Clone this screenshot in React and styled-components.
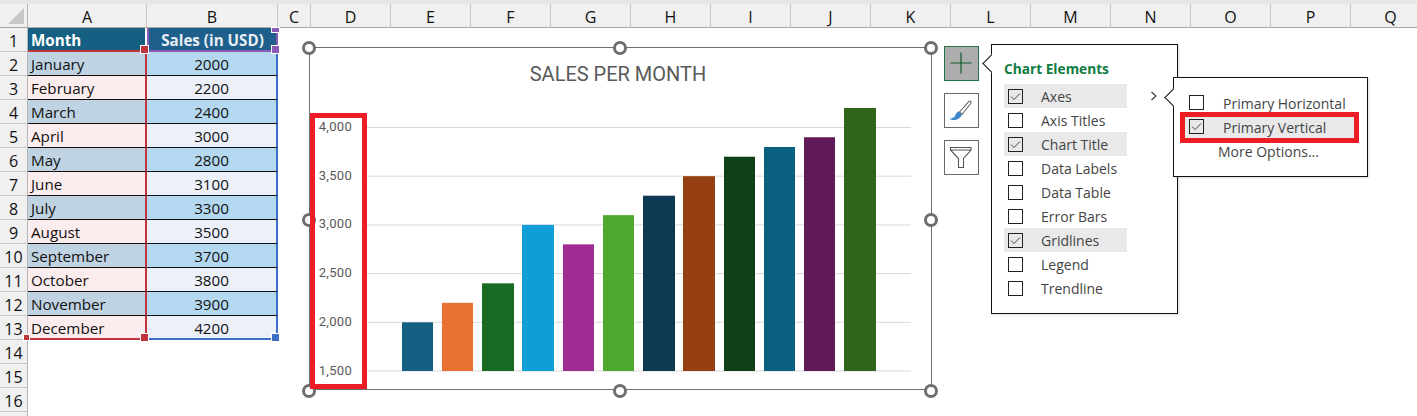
import React from "react";
import styled, { createGlobalStyle } from "styled-components";

const Global = createGlobalStyle`
  html, body { margin: 0; padding: 0; background: #fff; overflow: hidden; }
  * { box-sizing: border-box; }
`;

const Page = styled.div`
  position: relative;
  width: 1417px;
  height: 416px;
  overflow: hidden;
  background: #fff;
  font-family: "Open Sans", "Noto Sans", sans-serif;
`;
const TopStrip = styled.div`
  height: 4px;
  background: #e6e6e6;
`;
const Sheet = styled.div`
  display: grid;
  grid-template-columns: 28px 119px 131px 33px repeat(14, 80px);
  grid-template-rows: 24px;
  grid-auto-rows: 24px;
  width: 1431px;
`;
const Corner = styled.div`
  position: relative;
  background: #f0f0f0;
  border-right: 1px solid #b5b5b5;
  border-bottom: 1px solid #a8a8a8;
  &::after {
    content: "";
    position: absolute;
    right: 3px;
    bottom: 3px;
    border-style: solid;
    border-width: 0 0 16px 16px;
    border-color: transparent transparent #c8c8c8 transparent;
  }
`;
const ColHead = styled.div`
  display: flex;
  align-items: center;
  justify-content: center;
  padding-top: 2px;
  background: #f0f0f0;
  border-right: 1px solid #c6c6c6;
  border-bottom: 1px solid #a8a8a8;
  color: #111;
  font-size: 16px;
`;
const RowHead = styled.div`
  grid-column: 1;
  position: relative;
  display: flex;
  align-items: center;
  justify-content: center;
  padding-top: 2px;
  background: #f0f0f0;
  border-right: 1px solid #b5b5b5;
  border-bottom: 1px solid #c6c6c6;
  color: #111;
  font-size: 16px;
  ${(p) =>
    p.$tick &&
    `&::after {
      content: "";
      position: absolute;
      right: -3px;
      bottom: -2px;
      width: 5px;
      height: 5px;
      background: #c0353b;
      border: 1px solid #fff;
      z-index: 2;
    }`}
`;
const Cell = styled.div`
  position: relative;
  display: flex;
  align-items: center;
  justify-content: ${(p) => (p.$num ? "center" : "flex-start")};
  padding-left: ${(p) => (p.$num ? "0" : "3px")};
  padding-top: 1px;
  background: ${(p) => p.$bg};
  color: ${(p) => p.$fg || "#111"};
  font-size: 15.2px;
  font-weight: ${(p) => (p.$head ? 700 : 400)};
  border-bottom: ${(p) => p.$bottom};
  border-right: ${(p) => p.$right};
  border-left: ${(p) => p.$left || "none"};
  ${(p) =>
    p.$handle &&
    `&::after {
      content: "";
      position: absolute;
      right: -4px;
      bottom: -4px;
      width: 7px;
      height: 7px;
      background: ${p.$handle};
      border: 1px solid #fff;
      z-index: 2;
    }`}
  ${(p) =>
    p.$top &&
    `&::before {
      content: "";
      position: absolute;
      right: -4px;
      top: -1px;
      width: 7px;
      height: 4px;
      background: ${p.$top};
      border: 1px solid #fff;
      z-index: 2;
    }`}
`;
const OverlayRow = styled.div`
  position: absolute;
  left: 309px;
  top: 44px;
  display: flex;
  align-items: flex-start;
`;
const ChartFrame = styled.div`
  position: relative;
  flex: none;
  width: 623px;
  height: 343px;
  margin-top: 3px;
  background: #fff;
  box-shadow: inset 0 0 0 1px #6f6f6f;
`;
const ChartSvg = styled.svg`
  display: block;
  width: 623px;
  height: 343px;
`;
const Dot = styled.div`
  position: absolute;
  left: calc(${(p) => p.$x * 0.998}% - 7px);
  top: calc(${(p) => p.$y}% - 6px);
  width: 14px;
  height: 14px;
  border-radius: 50%;
  background: #fff;
  border: 3px solid #6e6e6e;
`;
const AxisMark = styled.div`
  position: absolute;
  left: 1px;
  top: 66px;
  width: 57px;
  height: 276px;
  border: 5px solid #ee1c25;
`;
const SideButtons = styled.div`
  flex: none;
  margin: 2px 12px 0 12px;
  display: flex;
  flex-direction: column;
  gap: 12px;
`;
const SideBtn = styled.div`
  width: 35px;
  height: 35px;
  display: flex;
  align-items: center;
  justify-content: center;
  background: ${(p) => (p.$on ? "#adadad" : "#fff")};
  border: 1px solid ${(p) => (p.$on ? "#217346" : "#6a6a6a")};
`;
const Pop = styled.div`
  background: #fff;
  border: 1px solid #111;
  box-shadow: 1px 1px 2px rgba(0, 0, 0, 0.12);
  &::before {
    content: "";
    position: absolute;
    left: -7px;
    top: ${(p) => p.$arrow}px;
    width: 12px;
    height: 12px;
    background: #fff;
    border-left: 1px solid #111;
    border-bottom: 1px solid #111;
    transform: rotate(45deg);
  }
`;
const MainPop = styled(Pop)`
  position: relative;
  flex: none;
  width: 187px;
  height: 270px;
  padding: 14px 0 0 12px;
`;
const Box = styled.div`
  flex: none;
  width: 15px;
  height: 15px;
  border: 1px solid #222;
  background: ${(p) => (p.$on ? "transparent" : "#fff")};
  display: flex;
  align-items: center;
  justify-content: center;
`;
const Label = styled.span`
  margin-left: ${(p) => p.$ml}px;
  color: #444;
  font-size: 14px;
  white-space: nowrap;
`;
const SubPop = styled(Pop)`
  position: absolute;
  left: 181px;
  top: 32px;
  width: 195px;
  height: 100px;
  padding: 14px 0 0 11px;
  ${Box} { margin-top: -3px; }
  ${Label} { margin-top: -1px; }
`;
const PopTitle = styled.div`
  height: 25px;
  line-height: 19px;
  color: #107c41;
  font-size: 13.7px;
  font-weight: 700;
`;
const Row = styled.div`
  position: relative;
  display: flex;
  align-items: center;
  height: 24px;
  width: ${(p) => p.$w}px;
  padding-left: 4px;
  background: ${(p) => (p.$hl ? "#e9e9e9" : "transparent")};
`;
const Chevron = styled.svg`
  position: absolute;
  left: 157px;
  top: 46px;
`;
const OptionMark = styled.div`
  position: absolute;
  left: -5px;
  top: -4px;
  width: 179px;
  height: 31px;
  border: 5px solid #ee1c25;
`;

const data = [
  ["January", 2000], ["February", 2200], ["March", 2400], ["April", 3000],
  ["May", 2800], ["June", 3100], ["July", 3300], ["August", 3500],
  ["September", 3700], ["October", 3800], ["November", 3900], ["December", 4200],
];
const bars = [
  [402, 31, "#156082"], [442, 31, "#e97132"], [482, 32, "#196b24"], [522, 32, "#0f9ed5"],
  [563, 31, "#a02b93"], [603, 31, "#4ea72e"], [643, 32, "#0d3a52"], [683, 32, "#963f12"],
  [724, 31, "#0f4016"], [764, 31, "#09607f"], [804, 31, "#601a58"], [844, 32, "#2f641b"],
];
const cols = "ABCDEFGHIJKLMNOPQ".split("");
const ticks = [4000, 3500, 3000, 2500, 2000, 1500];
const yOf = (v) => 371 - ((v - 1500) / 500) * 48.7;
const fmt = (v) => v.toLocaleString("en-US");
const dots = [[0, 0], [50, 0], [100, 0], [0, 50], [100, 50], [0, 100], [50, 100], [100, 100]];

const Check = () => (
  <svg width="13" height="13" viewBox="0 0 13 13">
    <path d="M2 6.5 L5 9.5 L11 3.5" fill="none" stroke="#444" strokeWidth="1" />
  </svg>
);
const Option = ({ text, checked, hl, w, ml, children }) => (
  <Row $hl={hl} $w={w}>
    <Box $on={checked}>{checked && <Check />}</Box>
    <Label $ml={ml}>{text}</Label>
    {children}
  </Row>
);

export default function App() {
  return (
    <Page>
      <Global />
      <TopStrip />
      <Sheet>
        <Corner />
        {cols.map((c) => <ColHead key={c}>{c}</ColHead>)}
        <RowHead>1</RowHead>
        <Cell $head $bg="#156082" $fg="#fff" $bottom="2px solid #c0353b" $right="2px solid #fff" $handle="#c0353b">Month</Cell>
        <Cell $head $num $bg="#1f5f8b" $fg="#e8eef5" $bottom="2px solid #8a5bb5" $right="2px solid #8a5bb5" $left="2px solid #8a5bb5" $handle="#8a5bb5" $top="#8a5bb5">Sales (in USD)</Cell>
        {data.map(([m, v], i) => {
          const last = i === data.length - 1;
          const odd = i % 2 === 0;
          return (
            <React.Fragment key={m}>
              <RowHead $tick={last}>{i + 2}</RowHead>
              <Cell $bg={odd ? "#c0d3e2" : "#fbeced"} $bottom={last ? "2px solid #c0353b" : "1px solid #111"} $right="2px solid #c0353b" $handle={last ? "#c0353b" : undefined}>{m}</Cell>
              <Cell $num $bg={odd ? "#b3d8f0" : "#ebf0f9"} $bottom={last ? "2px solid #3d6fc6" : "1px solid #111"} $right="2px solid #3d6fc6" $handle={last ? "#3d6fc6" : undefined}>{v}</Cell>
            </React.Fragment>
          );
        })}
        {[14, 15, 16].map((n) => <RowHead key={n}>{n}</RowHead>)}
        <RowHead />
      </Sheet>

      <OverlayRow>
        <ChartFrame>
          <ChartSvg viewBox="309 47 623 343">
            <text x="618" y="81" textAnchor="middle" fontFamily="Roboto, sans-serif" fontSize="20" fill="#595959">SALES PER MONTH</text>
            {ticks.map((t) => (
              <g key={t}>
                <line x1="367" x2="911" y1={yOf(t)} y2={yOf(t)} stroke="#d9d9d9" strokeWidth="1" />
                <text x="352" y={yOf(t) + 3.5} textAnchor="end" fontFamily="Roboto, sans-serif" fontSize="13" letterSpacing="0.3" fill="#595959">{fmt(t)}</text>
              </g>
            ))}
            {data.map(([m, v], i) => (
              <rect key={m} x={bars[i][0]} width={bars[i][1]} y={yOf(v)} height={371 - yOf(v)} fill={bars[i][2]} />
            ))}
          </ChartSvg>
          {dots.map(([x, y]) => <Dot key={`${x}-${y}`} $x={x} $y={y} />)}
          <AxisMark />
        </ChartFrame>

        <SideButtons>
          <SideBtn $on>
            <svg width="24" height="24" viewBox="0 0 24 24">
              <path d="M11 .5V21.5M.5 11H21.5" stroke="#0f5a2a" strokeWidth="1.2" fill="none" />
            </svg>
          </SideBtn>
          <SideBtn>
            <svg width="26" height="26" viewBox="0 0 26 26">
              <g transform="translate(-2.5 -1)">
                <path d="M13 15 L22 5 Q24 3 24.5 5 Q25 6 23 8 L15.5 17.5 Z" fill="#fff" stroke="#666" strokeWidth="1.1" />
                <path d="M12.5 14.5 C9 15 9.5 19 7 20.5 C5.5 21.5 4 21.5 3 22 C6 23.5 12 24 15.5 18 Z" fill="#3f86c9" />
              </g>
            </svg>
          </SideBtn>
          <SideBtn>
            <svg width="26" height="26" viewBox="0 0 26 26">
              <path d="M1.5 2.5 H22 V5 L14.5 13.5 V22.5 H9.5 V13.5 L1.5 5 Z M1.5 5 H22" fill="#fff" stroke="#555" strokeWidth="1.1" />
            </svg>
          </SideBtn>
        </SideButtons>

        <MainPop $arrow={12}>
          <PopTitle>Chart Elements</PopTitle>
          <Option text="Axes" checked hl w={123} ml={18} />
          <Option text="Axis Titles" w={123} ml={18} />
          <Option text="Chart Title" checked hl w={123} ml={18} />
          <Option text="Data Labels" w={123} ml={18} />
          <Option text="Data Table" w={123} ml={18} />
          <Option text="Error Bars" w={123} ml={18} />
          <Option text="Gridlines" checked hl w={123} ml={18} />
          <Option text="Legend" w={123} ml={18} />
          <Option text="Trendline" w={123} ml={18} />
          <Chevron width="10" height="10" viewBox="0 0 10 10">
            <path d="M2.5 1 L7 5 L2.5 9" fill="none" stroke="#333" strokeWidth="1.1" />
          </Chevron>
          <SubPop $arrow={13}>
            <Option text="Primary Horizontal" w={169} ml={19} />
            <Option text="Primary Vertical" checked hl w={169} ml={19}>
              <OptionMark />
            </Option>
            <Row $w={169}><Label $ml={29}>More Options...</Label></Row>
          </SubPop>
        </MainPop>
      </OverlayRow>
    </Page>
  );
}
